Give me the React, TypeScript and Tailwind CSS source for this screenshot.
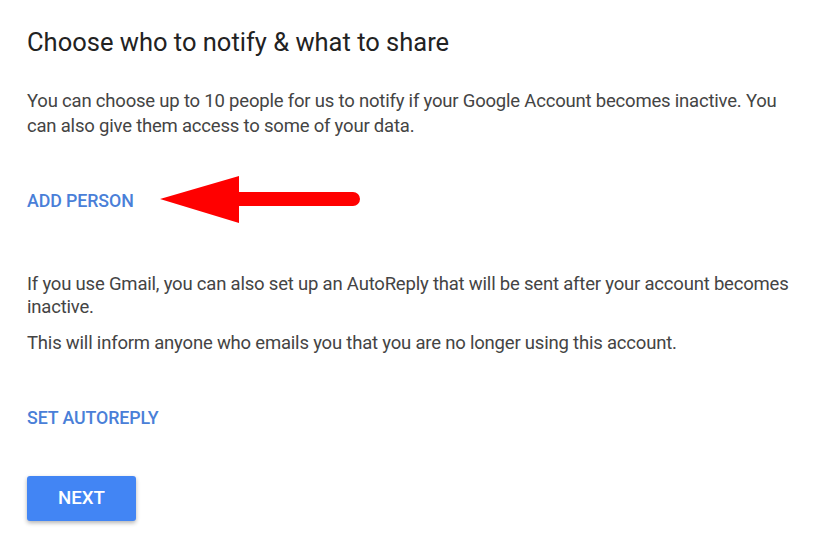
export default function App() {
  return (
    <div className="w-[817px] h-[546px] bg-white overflow-hidden font-['Roboto',sans-serif] pl-[27px] pr-[20px]">
      <h1 className="pt-[27px] text-[25.5px] leading-[30px] text-[#222]">Choose who to notify &amp; what to share</h1>

      <p className="mt-[32px] text-[18.5px] leading-[25px] text-[#444] tracking-[-0.2px]">
        You can choose up to 10 people for us to notify if your Google Account becomes inactive. You can also give them access to some of your data.
      </p>

      <div className="mt-[37px] flex items-center h-[50px]">
        <span className="text-[17.8px] font-medium text-[#4a7fd8] tracking-[-0.1px]">ADD PERSON</span>
        <svg width="202" height="50" viewBox="0 0 202 50" className="ml-[26px]">
          <path d="M0 23 L79 0 L79 16 L193 16 A7 7 0 0 1 193 30 L79 30 L79 47 Z" fill="#f00" />
        </svg>
      </div>

      <p className="mt-[47px] text-[18.5px] leading-[23px] text-[#444] tracking-[-0.2px]">
        If you use Gmail, you can also set up an AutoReply that will be sent after your account becomes inactive.
      </p>
      <p className="mt-[13px] text-[18.5px] leading-[23px] text-[#444] tracking-[-0.2px]">
        This will inform anyone who emails you that you are no longer using this account.
      </p>

      <div className="mt-[53px] text-[17.8px] font-medium leading-[20px] text-[#4a7fd8] tracking-[-0.1px]">SET AUTOREPLY</div>

      <button className="mt-[48px] w-[109px] h-[45px] rounded-[3px] bg-[#4285f4] text-white text-[18.7px] font-medium shadow-[0_2px_4px_rgba(0,0,0,0.3)]">
        NEXT
      </button>
    </div>
  );
}
